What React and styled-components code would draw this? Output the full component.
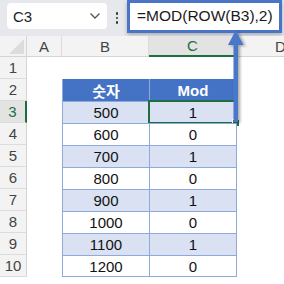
import React from 'react';
import styled, { createGlobalStyle } from 'styled-components';

const GlobalStyle = createGlobalStyle`
  html, body {
    margin: 0;
    padding: 0;
    background: #ffffff;
  }
  body {
    font-family: 'Liberation Sans', Arial, sans-serif;
  }
`;

const rows = [
  [500, 1],
  [600, 0],
  [700, 1],
  [800, 0],
  [900, 1],
  [1000, 0],
  [1100, 1],
  [1200, 0],
];

export default function App() {
  return (
    <>
      <GlobalStyle />
      <Page>
        <Toolbar>
          <NameBox>
            <span>C3</span>
            <svg width="12" height="8" viewBox="0 0 12 8">
              <path d="M1.5 1.5 L6 6 L10.5 1.5" fill="none" stroke="#555" strokeWidth="1.3" />
            </svg>
          </NameBox>
          <Dots>
            <i />
            <i />
            <i />
          </Dots>
          <FormulaBox>=MOD(ROW(B3),2)</FormulaBox>
        </Toolbar>

        <Sheet>
          <Corner>
            <svg width="18" height="18" viewBox="0 0 18 18">
              <path d="M17 2 L17 17 L2 17 Z" fill="#dcdcdc" />
            </svg>
          </Corner>
          <ColHead>A</ColHead>
          <ColHead>B</ColHead>
          <ColHead $active>C</ColHead>
          <ColHead $edge>D</ColHead>

          <RowHead>1</RowHead>
          <Cell />
          <Cell />
          <Cell />
          <Cell />

          <RowHead>2</RowHead>
          <Cell />
          <HeadCell>숫자</HeadCell>
          <HeadCell $right>Mod</HeadCell>
          <Cell />

          {rows.map(([num, mod], i) => {
            const r = i + 3;
            const band = i % 2 === 0;
            const last = i === rows.length - 1;
            return (
              <React.Fragment key={r}>
                <RowHead $active={r === 3}>{r}</RowHead>
                <Cell />
                <TableCell $band={band} $last={last}>{num}</TableCell>
                <TableCell $band={band} $last={last} $right $selected={r === 3}>
                  {mod}
                  {r === 3 && <FillHandle />}
                </TableCell>
                <Cell />
              </React.Fragment>
            );
          })}
        </Sheet>

        <Arrow width="30" height="100" viewBox="0 0 30 100">
          <defs>
            <filter id="shade" x="-50%" y="-20%" width="200%" height="140%">
              <feDropShadow dx="2" dy="1" stdDeviation="1.5" floodColor="#000" floodOpacity="0.35" />
            </filter>
          </defs>
          <g filter="url(#shade)">
            <rect x="12.5" y="12" width="4.5" height="80" fill="#4a78c8" />
            <path d="M14.8 0 L22.5 15 L7 15 Z" fill="#4a78c8" />
          </g>
        </Arrow>
      </Page>
    </>
  );
}

const Page = styled.div`
  position: relative;
  width: 284px;
  height: 284px;
  overflow: hidden;
  background: #ffffff;
`;

const Toolbar = styled.div`
  height: 36px;
  background: #e6e8ec;
  display: flex;
  align-items: flex-start;
  padding-left: 7px;
`;

const NameBox = styled.div`
  margin-top: 3px;
  width: 100px;
  height: 26px;
  box-sizing: border-box;
  background: #ffffff;
  border-radius: 4px;
  display: flex;
  align-items: center;
  justify-content: space-between;
  padding: 0 6px 0 6px;
  font-size: 15px;
  color: #222;
`;

const Dots = styled.div`
  margin: 12px 0 0 8px;
  width: 4px;
  display: flex;
  flex-direction: column;
  align-items: center;
  gap: 2px;
  i {
    width: 2.5px;
    height: 2.5px;
    border-radius: 50%;
    background: #333;
  }
`;

const FormulaBox = styled.div`
  margin-left: 8px;
  width: 155px;
  height: 33px;
  box-sizing: border-box;
  border: 3px solid #4a74c6;
  background: #ffffff;
  font-size: 15.5px;
  color: #1a1a1a;
  padding: 4px 0 0 7px;
  box-shadow: 0 2px 4px rgba(0, 0, 0, 0.25);
`;

const Sheet = styled.div`
  display: grid;
  grid-template-columns: 27px 35px 87px 88px 1fr;
  grid-template-rows: 21px repeat(10, 22px);
  font-size: 15px;
`;

const Corner = styled.div`
  background: #f3f3f3;
  border-right: 1px solid #d4d4d4;
  border-bottom: 1px solid #d4d4d4;
  display: flex;
  align-items: flex-end;
  justify-content: flex-end;
  box-sizing: border-box;
  svg {
    margin: 0 1px 1px 0;
  }
`;

const ColHead = styled.div`
  box-sizing: border-box;
  background: ${(p) => (p.$active ? '#e3e3e3' : '#f3f3f3')};
  border-right: 1px solid #dcdcdc;
  border-bottom: ${(p) => (p.$active ? '2px solid #1e6f3f' : '1px solid #d4d4d4')};
  color: ${(p) => (p.$active ? '#1e6f3f' : '#444')};
  display: flex;
  align-items: center;
  justify-content: ${(p) => (p.$edge ? 'flex-start' : 'center')};
  padding-left: ${(p) => (p.$edge ? '38px' : '0')};
  font-size: 15px;
`;

const RowHead = styled.div`
  box-sizing: border-box;
  background: ${(p) => (p.$active ? '#e3e3e3' : '#f3f3f3')};
  border-right: ${(p) => (p.$active ? '2px solid #1e6f3f' : '1px solid #d4d4d4')};
  border-bottom: 1px solid #dcdcdc;
  color: ${(p) => (p.$active ? '#1e6f3f' : '#444')};
  display: flex;
  align-items: center;
  justify-content: center;
  font-size: 15px;
`;

const Cell = styled.div`
  background: #ffffff;
`;

const HeadCell = styled.div`
  box-sizing: border-box;
  background: #4472c4;
  color: #ffffff;
  font-weight: bold;
  font-family: 'Liberation Sans', 'Noto Sans CJK KR', sans-serif;
  display: flex;
  align-items: center;
  justify-content: center;
  border-left: 1px solid #8eaadb;
  border-right: ${(p) => (p.$right ? '1px solid #8eaadb' : 'none')};
`;

const TableCell = styled.div`
  position: relative;
  box-sizing: border-box;
  background: ${(p) => (p.$band ? '#d9e1f2' : '#ffffff')};
  border-left: 1px solid #8eaadb;
  border-top: 1px solid #8eaadb;
  border-right: ${(p) => (p.$right ? '1px solid #8eaadb' : 'none')};
  border-bottom: ${(p) => (p.$last ? '1px solid #8eaadb' : 'none')};
  outline: ${(p) => (p.$selected ? '2px solid #1e6f3f' : 'none')};
  outline-offset: -1px;
  display: flex;
  align-items: center;
  justify-content: center;
  color: #111;
`;

const FillHandle = styled.span`
  position: absolute;
  right: -4px;
  bottom: -4px;
  width: 6px;
  height: 6px;
  background: #1e6f3f;
  border: 1px solid #ffffff;
`;

const Arrow = styled.svg`
  position: absolute;
  left: 221px;
  top: 30px;
  pointer-events: none;
`;
